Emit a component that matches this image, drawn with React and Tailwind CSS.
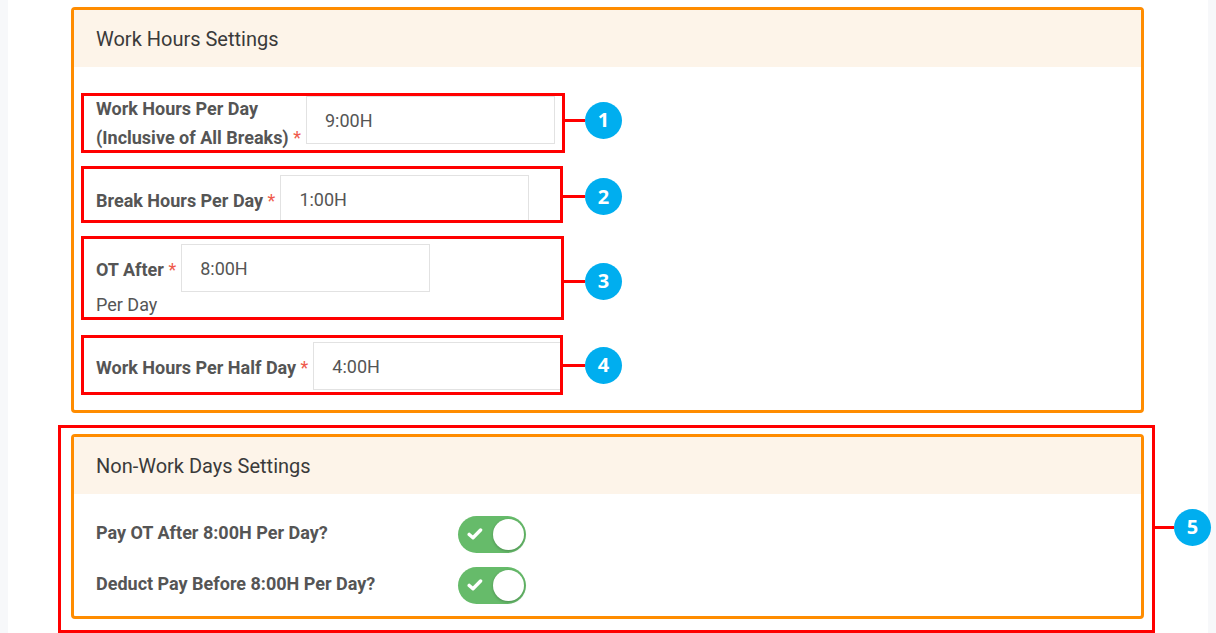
import React from "react";

const font = { fontFamily: "Roboto, 'Liberation Sans', sans-serif" };

function Req() {
  return <span className="text-[#ef5a4c] font-normal"> *</span>;
}

function TimeInput({ value, className = "" }) {
  return (
    <div
      className={
        "h-[48px] w-[249px] border border-[#e2e2e2] bg-white flex items-center pl-[18px] text-[18px] text-[#555] shrink-0 " +
        className
      }
    >
      {value}
    </div>
  );
}

function Toggle() {
  return (
    <div className="relative w-[68px] h-[37px] rounded-full bg-[#66bb6a] shrink-0">
      <svg
        className="absolute left-[9px] top-[11px]"
        width="16"
        height="14"
        viewBox="0 0 16 14"
      >
        <path
          d="M2.2 7.4 L6 10.8 L13.6 3"
          fill="none"
          stroke="white"
          strokeWidth="3.4"
          strokeLinecap="round"
          strokeLinejoin="round"
        />
      </svg>
      <div className="absolute right-[2px] top-[3px] w-[31px] h-[31px] rounded-full bg-white shadow-[0_1px_3px_rgba(0,0,0,0.25)]" />
    </div>
  );
}

function Marker({ n, box, lineW, shift = "", className }) {
  return (
    <div className={"absolute flex items-center " + className}>
      <div className={"border-[3px] border-[#ff0000] shrink-0 " + box} />
      <div className={"flex items-center shrink-0 " + shift}>
        <div className={"h-[3px] bg-[#ff0000] " + lineW} />
        <div
          className="w-[37px] h-[37px] rounded-full bg-[#00aeef] text-white flex items-center justify-center text-[20px] font-bold"
          style={{ fontFamily: "'Open Sans', 'Noto Sans', sans-serif" }}
        >
          {n}
        </div>
      </div>
    </div>
  );
}

function SectionHeader({ children }) {
  return (
    <div className="h-[57px] bg-[#fdf4e9] px-[22px] flex items-center text-[20px] text-[#3a3a3a]">
      {children}
    </div>
  );
}

export default function App() {
  return (
    <div
      className="relative w-[1216px] h-[633px] bg-[#f7f8fa] px-2 overflow-hidden"
      style={font}
    >
      <div className="bg-white h-full pt-[7px] pl-[63px] pr-[64px] flex flex-col gap-[21px]">
        {/* Card 1 */}
        <div className="h-[406px] border-[3px] border-[#ff8c00] rounded-[4px] bg-white">
          <SectionHeader>Work Hours Settings</SectionHeader>
          <div className="pl-[22px] pt-[27px] flex flex-col">
            <div className="flex items-start gap-[5px]">
              <div className="text-[18px] font-bold text-[#555] leading-[29px]">
                Work Hours Per Day
                <br />
                (Inclusive of All Breaks)
                <Req />
              </div>
              <TimeInput value="9:00H" className="mt-[2px]" />
            </div>
            <div className="flex items-center gap-[5px] mt-[23px]">
              <div className="text-[18px] font-bold text-[#555] pt-[3px]">
                Break Hours Per Day
                <Req />
              </div>
              <TimeInput value="1:00H" />
            </div>
            <div className="flex items-center gap-[5px] mt-[21px]">
              <div className="text-[18px] font-bold text-[#555] pt-[3px]">
                OT After
                <Req />
              </div>
              <TimeInput value="8:00H" />
            </div>
            <div className="mt-[1px] leading-[24px] text-[18px] text-[#555]">
              Per Day
            </div>
            <div className="flex items-center gap-[5px] mt-[25px]">
              <div className="text-[18px] font-bold text-[#555] pt-[2px]">
                Work Hours Per Half Day
                <Req />
              </div>
              <TimeInput value="4:00H" />
            </div>
          </div>
        </div>

        {/* Card 2 */}
        <div className="h-[185px] border-[3px] border-[#ff8c00] rounded-[4px] bg-white">
          <SectionHeader>Non-Work Days Settings</SectionHeader>
          <div className="pl-[22px] pt-[22px] flex flex-col gap-[14px]">
            <div className="flex items-center">
              <div className="w-[362px] text-[18px] font-bold text-[#555] pb-[5px]">
                Pay OT After 8:00H Per Day?
              </div>
              <Toggle />
            </div>
            <div className="flex items-center">
              <div className="w-[362px] text-[18px] font-bold text-[#555] pb-[5px]">
                Deduct Pay Before 8:00H Per Day?
              </div>
              <Toggle />
            </div>
          </div>
        </div>
      </div>

      {/* Annotations */}
      <Marker n="1" box="w-[484px] h-[60px]" lineW="w-[20px]" shift="-translate-y-[3px]" className="left-[81px] top-[93px]" />
      <Marker n="2" box="w-[482px] h-[57px]" lineW="w-[22px]" shift="translate-y-[2px]" className="left-[81px] top-[166px]" />
      <Marker n="3" box="w-[483px] h-[84px]" lineW="w-[21px]" shift="translate-y-[3px]" className="left-[81px] top-[236px]" />
      <Marker n="4" box="w-[482px] h-[60px]" lineW="w-[22px]" className="left-[81px] top-[335px]" />
      <Marker n="5" box="w-[1097px] h-[208px]" lineW="w-[19px]" shift="-translate-y-[2px]" className="left-[58px] top-[425px]" />
    </div>
  );
}
